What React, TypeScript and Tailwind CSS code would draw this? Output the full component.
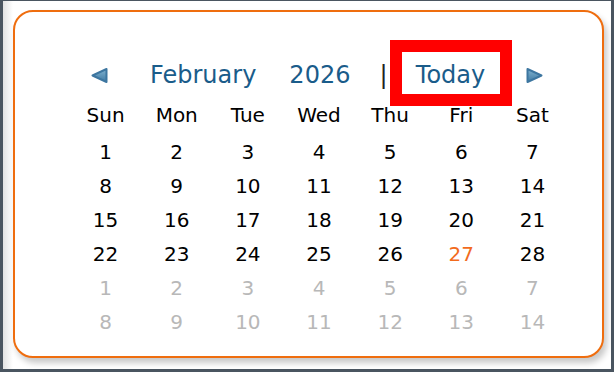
import React from "react";

const dayNames = ["Sun", "Mon", "Tue", "Wed", "Thu", "Fri", "Sat"];

type Cell = { n: number; kind: "cur" | "today" | "next" };

function buildWeeks(): Cell[][] {
  const cells: Cell[] = [];
  for (let d = 1; d <= 28; d++) cells.push({ n: d, kind: d === 27 ? "today" : "cur" });
  for (let d = 1; d <= 14; d++) cells.push({ n: d, kind: "next" });
  const weeks: Cell[][] = [];
  for (let i = 0; i < cells.length; i += 7) weeks.push(cells.slice(i, i + 7));
  return weeks;
}

function Arrow({ dir }: { dir: "left" | "right" }) {
  const pts = dir === "left" ? "16.5,2 16.5,15 2.5,8.5" : "1.5,2 1.5,15 15.5,8.5";
  const id = "g-" + dir;
  return (
    <svg width="18" height="17" viewBox="0 0 18 17" className="block">
      <defs>
        <linearGradient id={id} x1="0" y1="0" x2="0" y2="1">
          <stop offset="0" stopColor="#80b2d0" />
          <stop offset="1" stopColor="#3f7aa3" />
        </linearGradient>
      </defs>
      <polygon points={pts} fill={`url(#${id})`} stroke="#3d76a0" strokeWidth="2" strokeLinejoin="round" />
    </svg>
  );
}

export default function App() {
  const weeks = buildWeeks();
  return (
    <div
      className="w-[614px] h-[372px] bg-[#4a5560] pt-[1px] px-[3px] pb-[3px]"
      style={{ fontFamily: '"DejaVu Sans", Verdana, sans-serif' }}
    >
      <div className="w-full h-full bg-[linear-gradient(to_right,#e2e2e2_0px,#ffffff_10px)] pt-[9px] pl-[10px]">
        <div className="w-[591px] h-[348px] bg-white border-2 border-[#ef6d0e] rounded-[20px] shadow-[3px_5px_6px_rgba(0,0,0,0.22)] pt-[46px]">
          {/* header */}
          <div className="flex items-center h-[34px] text-[24px] text-[#1a5c8a]">
            <div className="ml-[75px]">
              <Arrow dir="left" />
            </div>
            <span className="ml-[42px]">February</span>
            <span className="ml-[33px]">2026</span>
            <span className="ml-[29px] text-[#222]">|</span>
            <span className="ml-[14px] mb-[4px] pt-[4px] w-[98px] h-[42px] flex items-center justify-center outline-[12px] outline-solid outline-[#ff0000]">
              Today
            </span>
            <div className="ml-[26px]">
              <Arrow dir="right" />
            </div>
          </div>

          {/* day names */}
          <div className="grid grid-cols-7 w-[498px] ml-[55px] mt-[6px] h-[34px] items-center text-[20px] text-black">
            {dayNames.map((d) => (
              <div key={d} className="text-center">
                {d}
              </div>
            ))}
          </div>

          {/* dates */}
          <div className="mt-[3px]">
            {weeks.map((w, i) => (
              <div key={i} className="grid grid-cols-7 w-[498px] ml-[55px] h-[34px] items-center text-[20px]">
                {w.map((c, j) => (
                  <div
                    key={j}
                    className={
                      c.kind === "today"
                        ? "text-center text-[#f26b1d]"
                        : c.kind === "next"
                        ? "text-center text-[#b8b8b8]"
                        : "text-center text-black"
                    }
                  >
                    {c.n}
                  </div>
                ))}
              </div>
            ))}
          </div>
        </div>
      </div>
    </div>
  );
}
